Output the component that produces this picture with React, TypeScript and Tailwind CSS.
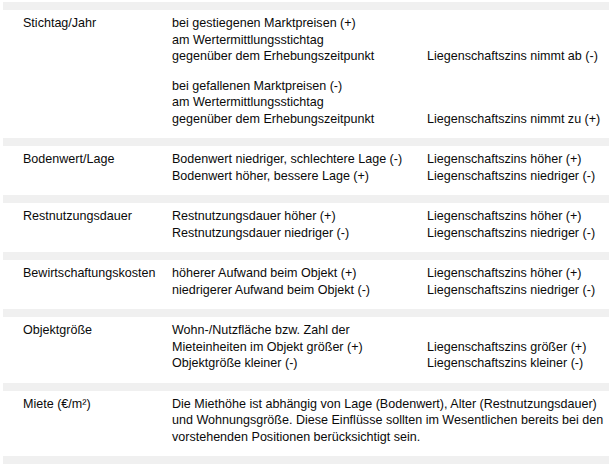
import React from 'react';

type Block = { left: string[]; right: string[] };
type Row = { label: string; blocks?: Block[]; text?: string[] };

const rows: Row[] = [
  {
    label: 'Stichtag/Jahr',
    blocks: [
      {
        left: ['bei gestiegenen Marktpreisen (+)', 'am Wertermittlungsstichtag', 'gegenüber dem Erhebungszeitpunkt'],
        right: ['Liegenschaftszins nimmt ab (-)'],
      },
      {
        left: ['bei gefallenen Marktpreisen (-)', 'am Wertermittlungsstichtag', 'gegenüber dem Erhebungszeitpunkt'],
        right: ['Liegenschaftszins nimmt zu (+)'],
      },
    ],
  },
  {
    label: 'Bodenwert/Lage',
    blocks: [
      {
        left: ['Bodenwert niedriger, schlechtere Lage (-)', 'Bodenwert höher, bessere Lage (+)'],
        right: ['Liegenschaftszins höher (+)', 'Liegenschaftszins niedriger (-)'],
      },
    ],
  },
  {
    label: 'Restnutzungsdauer',
    blocks: [
      {
        left: ['Restnutzungsdauer höher (+)', 'Restnutzungsdauer niedriger (-)'],
        right: ['Liegenschaftszins höher (+)', 'Liegenschaftszins niedriger (-)'],
      },
    ],
  },
  {
    label: 'Bewirtschaftungskosten',
    blocks: [
      {
        left: ['höherer Aufwand beim Objekt (+)', 'niedrigerer Aufwand beim Objekt (-)'],
        right: ['Liegenschaftszins höher (+)', 'Liegenschaftszins niedriger (-)'],
      },
    ],
  },
  {
    label: 'Objektgröße',
    blocks: [
      {
        left: ['Wohn-/Nutzfläche bzw. Zahl der', 'Mieteinheiten im Objekt größer (+)', 'Objektgröße kleiner (-)'],
        right: ['Liegenschaftszins größer (+)', 'Liegenschaftszins kleiner (-)'],
      },
    ],
  },
  {
    label: 'Miete (€/m²)',
    text: [
      'Die Miethöhe ist abhängig von Lage (Bodenwert), Alter (Restnutzungsdauer)',
      'und Wohnungsgröße. Diese Einflüsse sollten im Wesentlichen bereits bei den',
      'vorstehenden Positionen berücksichtigt sein.',
    ],
  },
];

const Bar = () => <div className="h-2 bg-[#f0f0f0]" />;

export default function App() {
  return (
    <div className="w-[616px] h-[464px] bg-white overflow-hidden">
      <div
        className="mt-[2px] ml-[3px] w-[606px] text-[12.55px] leading-[16.5px] text-[#0a0a0a]"
        style={{ fontFamily: '"Liberation Sans", Arial, sans-serif' }}
      >
        <Bar />
        {rows.map(row => (
          <div key={row.label}>
            <div className="flex pl-5 pt-[5px] pb-[11px]">
              <div className="w-[149px] shrink-0">{row.label}</div>
              {row.text ? (
                <div className="flex-1">
                  {row.text.map(line => (
                    <div key={line} className="whitespace-nowrap">{line}</div>
                  ))}
                </div>
              ) : (
                <div className="flex-1 flex flex-col gap-[13px]">
                  {row.blocks!.map((block, i) => (
                    <div key={i} className="flex items-end">
                      <div className="w-[255px] shrink-0">
                        {block.left.map(line => (
                          <div key={line} className="whitespace-nowrap">{line}</div>
                        ))}
                      </div>
                      <div className="flex-1">
                        {block.right.map(line => (
                          <div key={line} className="whitespace-nowrap">{line}</div>
                        ))}
                      </div>
                    </div>
                  ))}
                </div>
              )}
            </div>
            <Bar />
          </div>
        ))}
      </div>
    </div>
  );
}
